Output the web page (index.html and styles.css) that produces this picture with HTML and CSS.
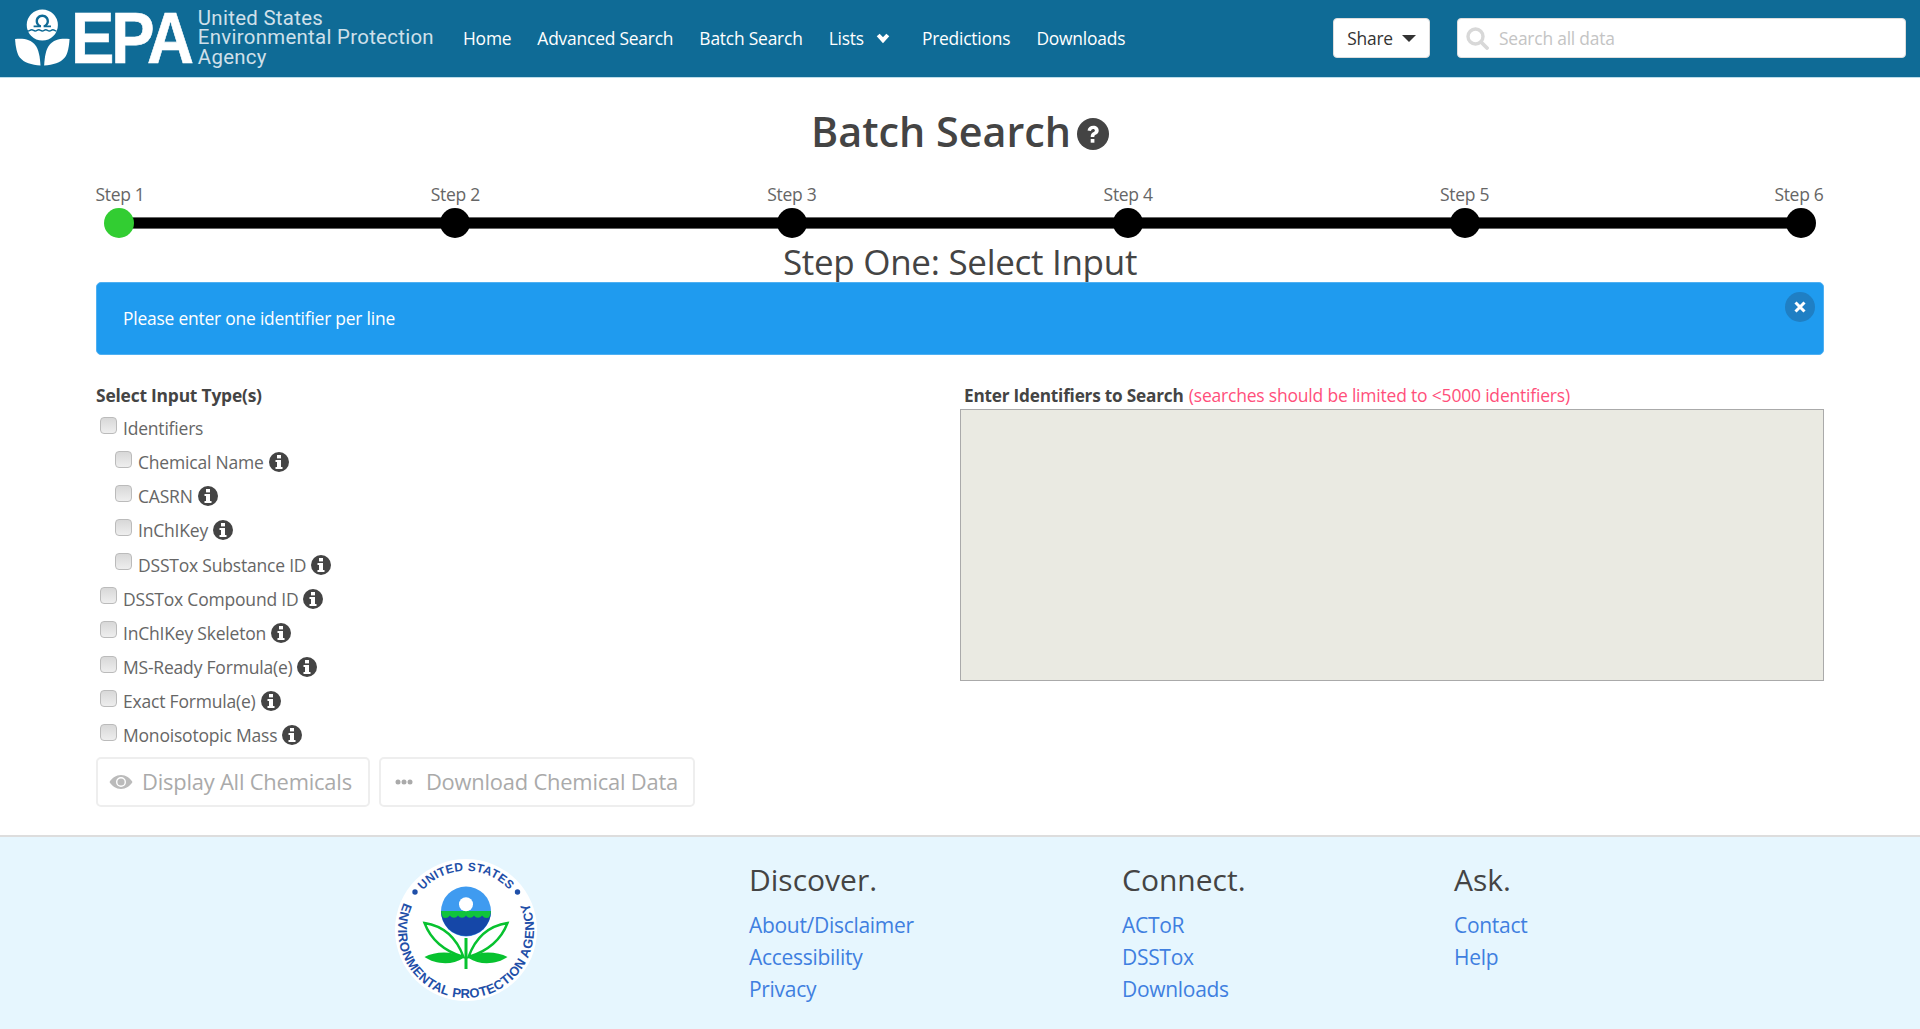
FILE: index.html
```html
<!DOCTYPE html>
<html lang="en">
<head>
<meta charset="utf-8">
<title>Batch Search</title>
<link rel="stylesheet" href="styles.css">
</head>
<body>
<header class="topbar">
  <a class="brand">
    <svg class="brand-mark" viewBox="0 0 54.700 54.700" width="58" height="58">
      <circle cx="26.700" cy="16" r="14.700" fill="#fff"/>
      <path fill="#0f6b96" d="M18.500 18.200v-1.600h3.800c-1.200-1-1.900-2.500-1.900-4.200 0-3.500 2.800-6.200 6.300-6.200s6.300 2.700 6.300 6.200c0 1.700-.7 3.200-1.900 4.200h3.800v1.600h-7v-2c1.700-.6 2.900-2.100 2.900-3.800 0-2.300-1.900-4-4.100-4s-4.100 1.700-4.100 4c0 1.700 1.200 3.200 2.900 3.800v2z"/>
      <path fill="none" stroke="#0f6b96" stroke-width="1.300" d="M10 20.500c1.600 0 1.600 1.200 3.300 1.200s1.700-1.200 3.400-1.200 1.700 1.200 3.300 1.200 1.700-1.200 3.400-1.200 1.600 1.200 3.300 1.200 1.700-1.200 3.300-1.200 1.700 1.200 3.400 1.200 1.700-1.200 3.300-1.200 1.700 1.200 3.400 1.200"/>
      <path fill="#fff" d="M1 29.300c8-1 15 .5 19 5.500 3.300 4.200 4.500 11 5 19.500-8.500-.5-15.500-2.500-19.500-7.500-3-3.800-4-10.500-4.500-17.500z"/>
      <path fill="#fff" d="M52.400 29.300c-8-1-15 .5-19 5.500-3.300 4.200-4.500 11-5 19.500 8.500-.5 15.500-2.500 19.500-7.500 3-3.800 4-10.500 4.500-17.500z"/>
    </svg>
    <span class="brand-epa">EPA</span>
    <span class="brand-name">United States<br>Environmental Protection<br>Agency</span>
  </a>
  <nav class="nav">
    <a>Home</a>
    <a>Advanced Search</a>
    <a>Batch Search</a>
    <a class="nav-lists">Lists
      <svg viewBox="0 0 14 12" width="14" height="12"><path d="M2.200 3 7 8.200 11.800 3" fill="none" stroke="#fff" stroke-width="4"/></svg>
    </a>
    <a>Predictions</a>
    <a>Downloads</a>
  </nav>
  <button class="share">Share <span class="caret"></span></button>
  <div class="search">
    <svg viewBox="0 0 24 24" width="24" height="24"><circle cx="10.500" cy="10.500" r="7.500" fill="none" stroke="#d8d8d8" stroke-width="3.400"/><path d="M16 16l6 6" stroke="#d8d8d8" stroke-width="3.800" stroke-linecap="round"/></svg>
    <span>Search all data</span>
  </div>
</header>

<main class="content">
  <h1 class="title">Batch Search<svg class="help" viewBox="0 0 32 32" width="32" height="32"><circle cx="16" cy="16" r="16" fill="#444"/><path d="M10.500 12.500c.5-3 2.800-4.700 5.800-4.700 3.200 0 5.400 2 5.400 4.600 0 2.200-1.200 3.300-2.700 4.200-1.300.8-1.700 1.200-1.700 2.500h-3.600c0-2.700.8-3.700 2.500-4.800 1.100-.7 1.700-1.100 1.700-1.900 0-.9-.7-1.500-1.700-1.500-1.200 0-1.900.8-2.300 2z" fill="#fff"/><rect x="13.700" y="21" width="3.700" height="3.700" fill="#fff"/></svg></h1>

  <div class="stepper">
    <div class="step"><span>Step 1</span><i class="dot dot-on"></i></div>
    <div class="step"><span>Step 2</span><i class="dot"></i></div>
    <div class="step"><span>Step 3</span><i class="dot"></i></div>
    <div class="step"><span>Step 4</span><i class="dot"></i></div>
    <div class="step"><span>Step 5</span><i class="dot"></i></div>
    <div class="step"><span>Step 6</span><i class="dot"></i></div>
  </div>

  <h2 class="subtitle">Step One: Select Input</h2>

  <div class="alert">
    <span>Please enter one identifier per line</span>
    <button class="alert-close"><svg viewBox="0 0 12 12" width="12" height="12"><path d="M1.500 1.500l9 9M10.500 1.500l-9 9" stroke="#fff" stroke-width="3"/></svg></button>
  </div>

  <div class="columns">
    <section class="inputs">
      <div class="heading">Select Input Type(s)</div>
      <ul class="checks">
        <li><i class="box"></i>Identifiers</li>
        <li class="sub"><i class="box"></i>Chemical Name<svg class="info"><use href="#info"/></svg></li>
        <li class="sub"><i class="box"></i>CASRN<svg class="info"><use href="#info"/></svg></li>
        <li class="sub"><i class="box"></i>InChIKey<svg class="info"><use href="#info"/></svg></li>
        <li class="sub"><i class="box"></i>DSSTox Substance ID<svg class="info"><use href="#info"/></svg></li>
        <li><i class="box"></i>DSSTox Compound ID<svg class="info"><use href="#info"/></svg></li>
        <li><i class="box"></i>InChIKey Skeleton<svg class="info"><use href="#info"/></svg></li>
        <li><i class="box"></i>MS-Ready Formula(e)<svg class="info"><use href="#info"/></svg></li>
        <li><i class="box"></i>Exact Formula(e)<svg class="info"><use href="#info"/></svg></li>
        <li><i class="box"></i>Monoisotopic Mass<svg class="info"><use href="#info"/></svg></li>
      </ul>
      <div class="actions">
        <button class="ghost"><svg viewBox="0 0 24 16" width="24" height="16"><path fill="#bbb" d="M12 1C7 1 3 4 0.500 8 3 12 7 15 12 15s9-3 11.500-7C21 4 17 1 12 1zm0 12a5 5 0 1 1 0-10 5 5 0 0 1 0 10z"/><circle cx="12" cy="8" r="3.600" fill="#bbb"/></svg>Display All Chemicals</button>
        <button class="ghost ghost-dots"><svg viewBox="0 0 18 6" width="18" height="6"><circle cx="3" cy="3" r="2.500" fill="#aaa"/><circle cx="9" cy="3" r="2.500" fill="#aaa"/><circle cx="15" cy="3" r="2.500" fill="#aaa"/></svg>Download Chemical Data</button>
      </div>
    </section>
    <section class="entry">
      <div class="heading heading-entry">Enter Identifiers to Search <span class="limit">(searches should be limited to &lt;5000 identifiers)</span></div>
      <div class="textbox"></div>
    </section>
  </div>
</main>

<footer class="footer">
  <svg class="seal" viewBox="0 0 142 142" width="142" height="142">
    <defs>
      <path id="arcTop" d="M27 32A58 58 0 0 1 115 32"/>
      <path id="arcBottom" d="M9.900 41.200A68 68 0 1 0 132.100 41.200"/>
    </defs>
    <circle cx="71" cy="71" r="71" fill="#fff"/>
    <text class="seal-text seal-top"><textPath href="#arcTop" startOffset="50%" text-anchor="middle">UNITED STATES</textPath></text>
    <text class="seal-text"><textPath href="#arcBottom" startOffset="50%" text-anchor="middle">ENVIRONMENTAL PROTECTION AGENCY</textPath></text>
    <circle cx="20" cy="33" r="2.700" fill="#1f4fa8"/>
    <circle cx="122.500" cy="33" r="2.700" fill="#1f4fa8"/>
    <circle cx="71" cy="52.500" r="25" fill="#3f9bf0"/>
    <path d="M46 52a25 25 0 0 0 50 0z" fill="#1547a8"/>
    <path d="M46 52h50c-.3 2.500-1 4.500-2 6.500-2.500 1-5 .5-7-2-2 3-6 3-8 0-2 3-6 3-8 0-2 3-6 3-8 0-2 3-6 3-8 0-2 2.500-4.500 3-7 2-1-2-1.700-4-2-6.500z" fill="#10c43c"/>
    <circle cx="71" cy="45.300" r="7" fill="#fff"/>
    <path d="M69.500 79h3v31h-3z" fill="#07c22f"/>
    <path d="M29.500 64c13 2 30 9 39 34-13-4-31-13-39-34z" fill="none" stroke="#07c22f" stroke-width="2.400"/>
    <path d="M112.500 64c-13 2-30 9-39 34 13-4 31-13 39-34z" fill="none" stroke="#07c22f" stroke-width="2.400"/>
    <path d="M29.500 98c10-5 27-7 39 1-12 8-29 6-39-1z" fill="#07c22f"/>
    <path d="M112.500 98c-10-5-27-7-39 1 12 8 29 6 39-1z" fill="#07c22f"/>
  </svg>
  <div class="foot-col foot-discover">
    <h3>Discover.</h3>
    <a>About/Disclaimer</a>
    <a>Accessibility</a>
    <a>Privacy</a>
  </div>
  <div class="foot-col foot-connect">
    <h3>Connect.</h3>
    <a>ACToR</a>
    <a>DSSTox</a>
    <a>Downloads</a>
  </div>
  <div class="foot-col">
    <h3>Ask.</h3>
    <a>Contact</a>
    <a>Help</a>
  </div>
</footer>

<svg class="sprites" width="0" height="0">
  <symbol id="info" viewBox="0 0 20 20">
    <circle cx="10" cy="10" r="10" fill="#444"/>
    <rect x="8" y="3" width="4" height="3.400" fill="#fff"/>
    <path d="M6.500 8h5.500v7h1.500v2h-7v-2H8v-5H6.500z" fill="#fff"/>
  </symbol>
</svg>
</body>
</html>
```
FILE: styles.css
```css
* { box-sizing: border-box; }
html, body { margin: 0; height: 100%; }
body {
  display: flex;
  flex-direction: column;
  height: 1029px;
  overflow: hidden;
  background: #fff;
  color: #444;
  font-family: "Open Sans", "Noto Sans", sans-serif;
}
.sprites { position: absolute; }

.topbar {
  display: flex;
  align-items: center;
  flex: none;
  height: 78px;
  padding: 0 14px 1px 14px;
  background: #0f6b96;
  border-bottom: 1px solid #bcdcea;
  color: #fff;
}
.brand { display: flex; align-items: center; width: 449px; flex: none; }
.brand-mark { flex: none; margin-top: -2px; }
.brand-epa {
  display: inline-block;
  margin-left: -1px;
  font: bold 65px/60px "Liberation Sans", sans-serif;
  letter-spacing: -3px;
  color: #fff;
  -webkit-text-stroke: .6px #fff;
  transform: scaleY(1.12);
}
.brand-name {
  margin-left: 7px;
  font: 20.400px/19.500px "Roboto", sans-serif;
  letter-spacing: .3px;
  color: #cfe0ea;
  white-space: nowrap;
}
.nav { display: flex; gap: 26px; font-size: 17.400px; letter-spacing: -.2px; flex: none; width: 870px; }
.nav-lists { display: inline-flex; align-items: center; gap: 12px; margin-right: 6px; }

.share {
  display: flex;
  align-items: center;
  justify-content: center;
  gap: 9px;
  width: 97px;
  height: 40px;
  flex: none;
  margin-right: 27px;
  padding: 0;
  background: #fff;
  border: 1px solid #ddd;
  border-radius: 4px;
  color: #333;
  font: 17.400px "Open Sans", sans-serif;
  letter-spacing: -.2px;
}
.caret { border: 7px solid transparent; border-top: 7px solid #333; border-bottom: 0; }
.search {
  display: flex;
  align-items: center;
  gap: 10px;
  flex: none;
  width: 449px;
  height: 40px;
  padding-left: 7px;
  background: #fff;
  border: 1px solid #ddd;
  border-radius: 4px;
  color: #c4c4c4;
  font-size: 17.400px;
  letter-spacing: -.2px;
}

.content { flex: none; height: 757px; padding: 0 96px; }
.title {
  display: flex;
  align-items: center;
  justify-content: center;
  gap: 6px;
  height: 53px;
  margin: 27px 0 0;
  color: #444;
  font-size: 41.300px;
  font-weight: 600;
  line-height: 53px;
}
.help { margin-top: 4px; }

.stepper {
  position: relative;
  display: flex;
  justify-content: space-between;
  margin-top: 24px;
}
.stepper::before {
  content: "";
  position: absolute;
  left: 23px;
  right: 23px;
  top: 35px;
  height: 10px;
  background: #000;
  border-top: 1px solid #666;
  border-bottom: 1px solid #666;
}
.step {
  position: relative;
  display: flex;
  flex-direction: column;
  align-items: center;
  width: 46px;
  font-size: 17.500px;
  line-height: 24px;
  color: #666;
  letter-spacing: -.3px;
  white-space: nowrap;
}
.step:last-child span { margin-right: 4px; }
.step:first-child span { margin-left: 2px; }
.dot { display: block; width: 30px; height: 30px; margin-top: 2px; background: #000; border-radius: 50%; }
.dot-on { background: #32cd32; }

.subtitle {
  height: 42px;
  margin: 2px 0 0;
  color: #444;
  font-size: 35px;
  font-weight: 400;
  line-height: 44px;
  text-align: center;
  letter-spacing: -.3px;
}
.alert {
  position: relative;
  display: flex;
  align-items: center;
  height: 73px;
  padding: 0 0 2px 26px;
  background: #1f9bef;
  border: 1px solid #4fb0f2;
  border-radius: 5px;
  color: #fff;
  font-size: 17.400px;
  letter-spacing: -.2px;
}
.alert-close {
  position: absolute;
  top: 9px;
  right: 8px;
  display: flex;
  align-items: center;
  justify-content: center;
  width: 30px;
  height: 30px;
  padding: 0;
  background: #1f7fc4;
  border: 0;
  border-radius: 50%;
}

.columns { display: grid; grid-template-columns: 864px 864px; margin-top: 28px; }
.heading {
  height: 26px;
  color: #444;
  font-size: 17.400px;
  font-weight: 700;
  line-height: 24px;
  letter-spacing: -.2px;
  white-space: nowrap;
}
.heading-entry { padding-left: 4px; font-size: 17.200px; }
.limit { color: #ff4f7b; font-weight: 400; font-size: 17.500px; margin-left: 1px; }
.checks { list-style: none; margin: 2px 0 0; padding: 0; }
.checks li {
  display: flex;
  align-items: center;
  height: 34.150px;
  padding-left: 4px;
  color: #666;
  font-size: 17.500px;
  letter-spacing: -.2px;
}
.checks .sub { padding-left: 19px; }
.box {
  flex: none;
  width: 17px;
  height: 17px;
  margin: -6px 6px 0 0;
  background: linear-gradient(#d8d8d8, #eee);
  border: 1px solid #bbb;
  border-radius: 4px;
}
.info { width: 20px; height: 20px; margin-left: 5px; flex: none; }
.actions { display: flex; gap: 9px; margin-top: 5px; }
.ghost {
  display: flex;
  align-items: center;
  gap: 9px;
  height: 50px;
  padding: 0 16px 1px 11px;
  background: #fff;
  border: 2px solid #eee;
  border-radius: 5px;
  color: #aaa;
  font: 21.900px "Open Sans", sans-serif;
  letter-spacing: -.2px;
}
.ghost-dots { gap: 13px; padding-right: 15px; padding-left: 14px; }
.textbox { height: 272px; background: #eaeae2; border: 1px solid #aaa; }

.footer {
  position: relative;
  display: flex;
  flex: 1;
  padding: 21px 0 0 395px;
  background: #e6f6fe;
  border-top: 2px solid #ddd;
}
.seal { flex: none; margin-top: 1px; }
.seal-text { fill: #1f4fa8; font: bold 13px "Liberation Sans", sans-serif; letter-spacing: .3px; }
.seal-top { font-size: 12px; }
.foot-col { display: flex; flex-direction: column; width: 332px; }
.foot-discover { margin-left: 212px; width: 373px; }
.foot-connect { width: 332px; }
.foot-col h3 {
  height: 44px;
  margin: 0 0 7px;
  color: #444;
  font-size: 30px;
  font-weight: 400;
  line-height: 44px;
}
.foot-col a { color: #3f7fe0; font-size: 21px; line-height: 32px; letter-spacing: -.3px; }
```
